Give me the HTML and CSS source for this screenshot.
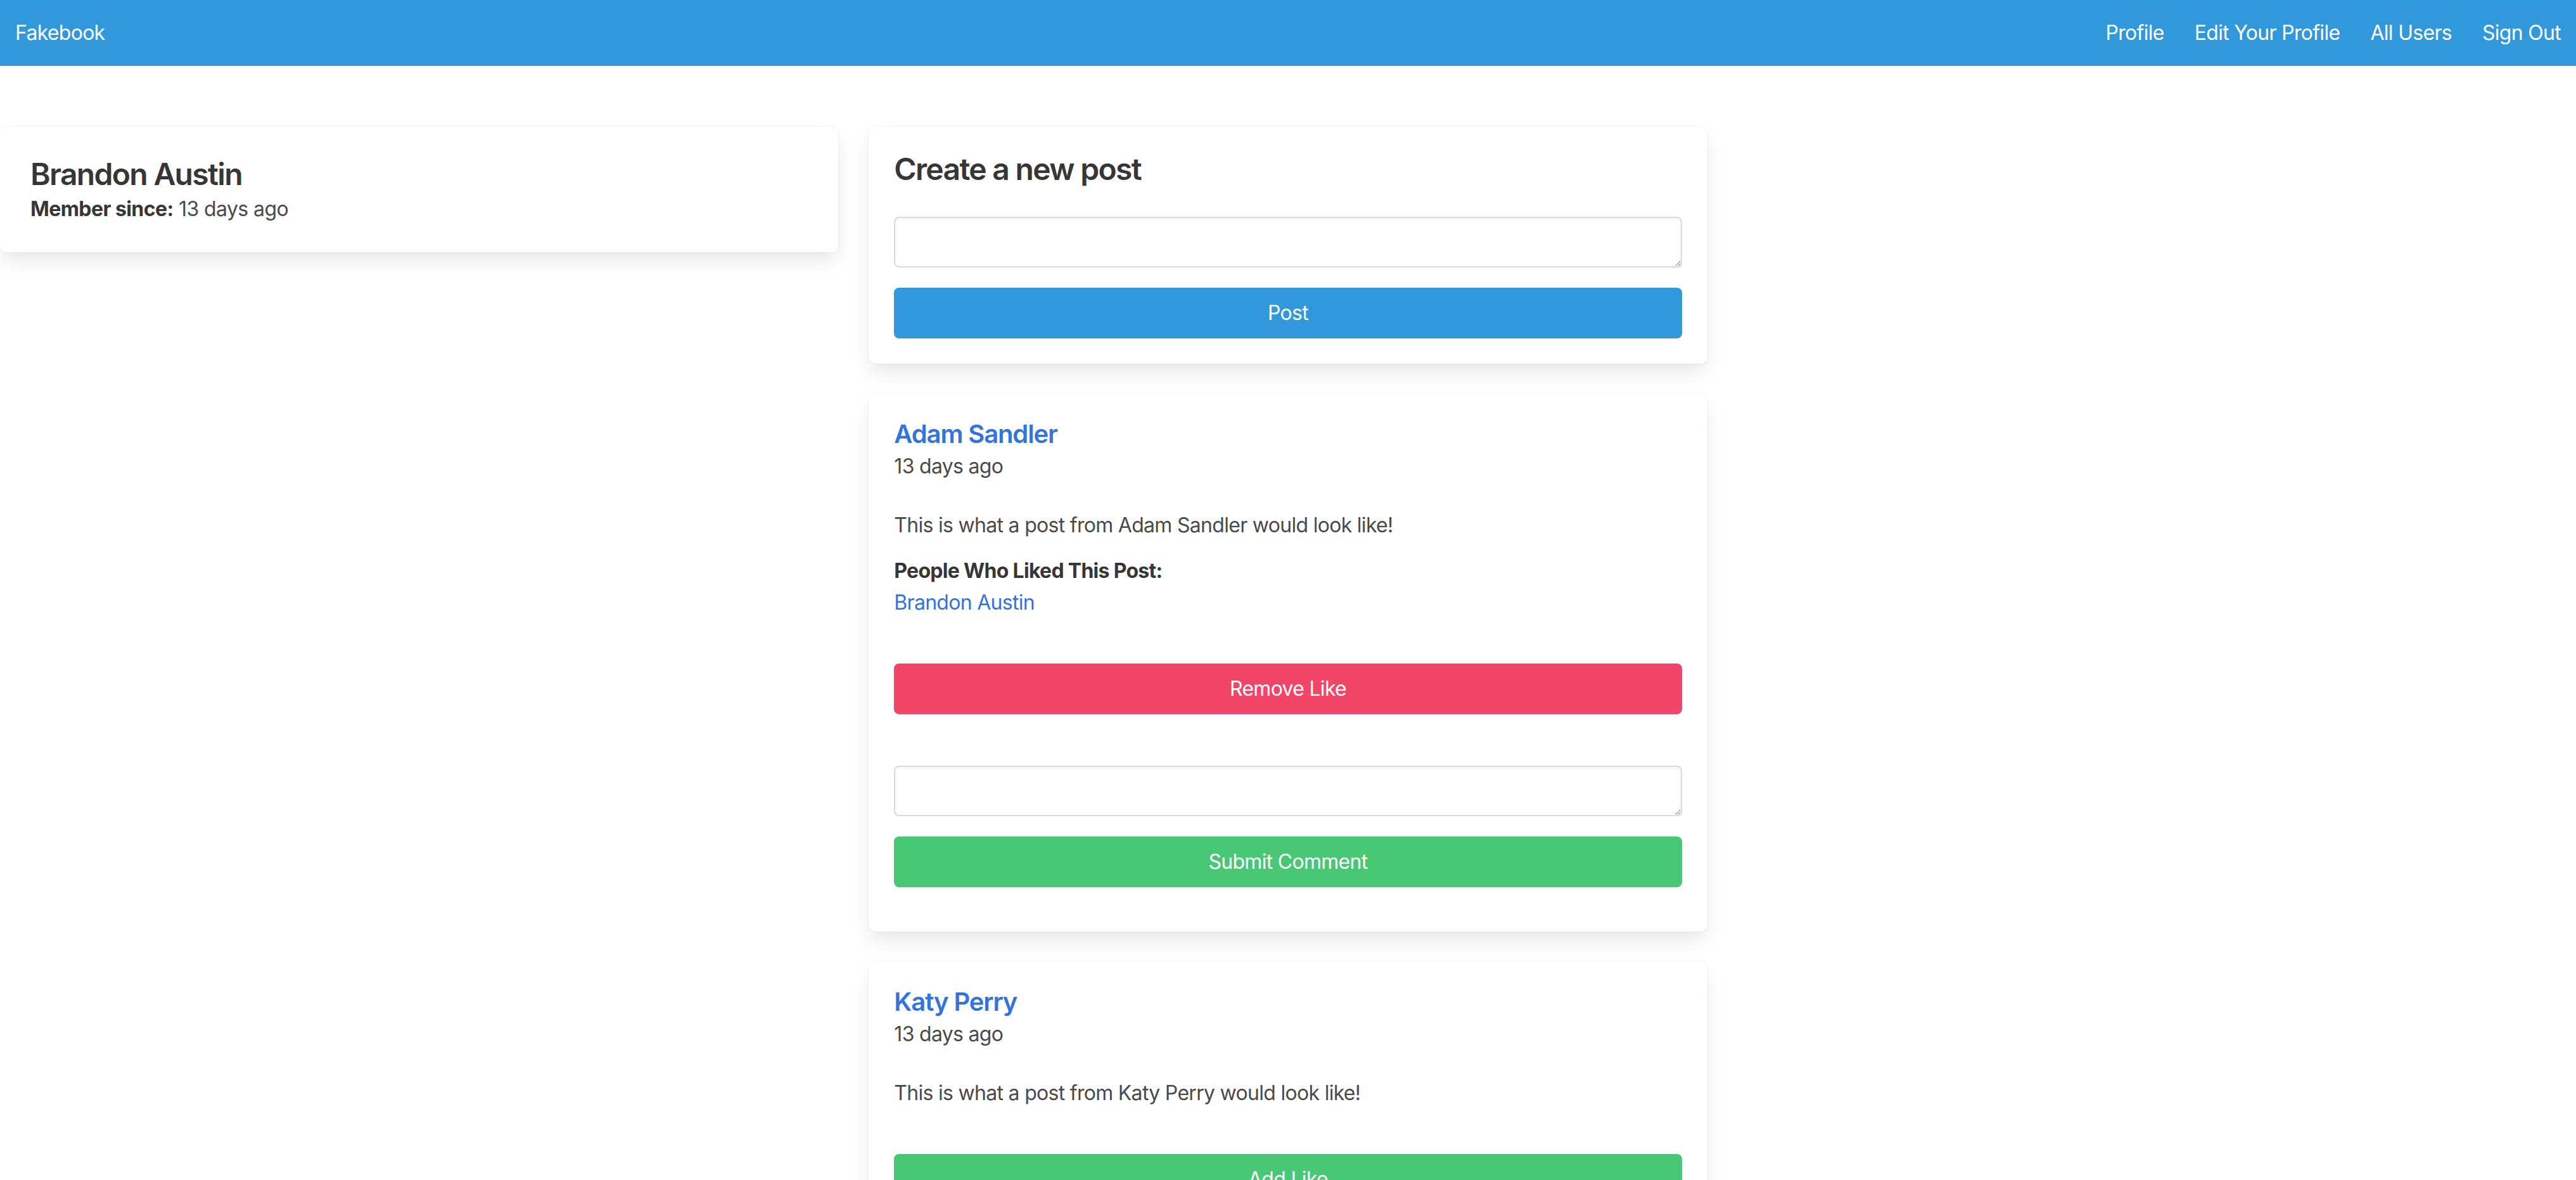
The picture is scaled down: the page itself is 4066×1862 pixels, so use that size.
FILE: index.html
```html
<!DOCTYPE html>
<html lang="en">
<head>
<meta charset="utf-8">
<title>Fakebook</title>
<link rel="stylesheet" href="styles.css">
</head>
<body>
<nav class="navbar">
  <a class="navbar-item brand" href="#">Fakebook</a>
  <div class="navbar-end">
    <a class="navbar-item" href="#">Profile</a>
    <a class="navbar-item" href="#">Edit Your Profile</a>
    <a class="navbar-item" href="#">All Users</a>
    <a class="navbar-item" href="#">Sign Out</a>
  </div>
</nav>
<main class="columns">
  <section class="column">
    <div class="card">
      <p class="card-title">Brandon Austin</p>
      <p class="member"><strong>Member since:</strong> 13 days ago</p>
    </div>
  </section>
  <section class="column">
    <div class="box">
      <h2 class="box-title">Create a new post</h2>
      <form class="form">
        <textarea class="input"></textarea>
        <button type="button" class="button is-info">Post</button>
      </form>
    </div>

    <div class="box">
      <a class="post-author" href="#">Adam Sandler</a>
      <p class="post-date">13 days ago</p>
      <p class="post-body">This is what a post from Adam Sandler would look like!</p>
      <p class="likes-title">People Who Liked This Post:</p>
      <a class="liker" href="#">Brandon Austin</a>
      <button type="button" class="button is-danger like-btn">Remove Like</button>
      <form class="form comment-form">
        <textarea class="input"></textarea>
        <button type="button" class="button is-success">Submit Comment</button>
      </form>
    </div>

    <div class="box">
      <a class="post-author" href="#">Katy Perry</a>
      <p class="post-date">13 days ago</p>
      <p class="post-body">This is what a post from Katy Perry would look like!</p>
      <button type="button" class="button is-success like-btn">Add Like</button>
      <form class="form comment-form">
        <textarea class="input"></textarea>
        <button type="button" class="button is-success">Submit Comment</button>
      </form>
    </div>
  </section>
  <section class="column"></section>
</main>
</body>
</html>
```
FILE: styles.css
```css
* { box-sizing: border-box; }
html, body {
  margin: 0;
  padding: 0;
  background: #fff;
}
body {
  font-family: Inter, "Noto Sans", "Liberation Sans", sans-serif;
  font-size: 32px;
  line-height: 1.5;
  letter-spacing: -0.022em;
  color: #4a4a4a;
}
a { text-decoration: none; }

.navbar {
  height: 104px;
  background: #3298dc;
  display: flex;
  align-items: center;
  justify-content: space-between;
}
.navbar-item {
  color: #fff;
  padding: 0 24px;
  line-height: 48px;
}
.navbar-end { display: flex; }

.columns {
  display: grid;
  grid-template-columns: repeat(3, 1fr);
  column-gap: 48px;
  padding-top: 96px;
  align-items: start;
}
.column { display: flex; flex-direction: column; }

.card {
  background: #fff;
  border-radius: 10px;
  box-shadow: 0 16px 32px -4px rgba(10,10,10,.1), 0 0 0 2px rgba(10,10,10,.02);
  padding: 48px 48px 44px;
}
.card-title {
  margin: 0;
  font-size: 48px;
  line-height: 54px;
  font-weight: 600;
  letter-spacing: -0.035em;
  color: #363636;
}
.member { margin: 4px 0 0; letter-spacing: -0.018em; }
.member strong { color: #363636; font-weight: 700; }

.box {
  background: #fff;
  border-radius: 12px;
  box-shadow: 0 16px 32px -4px rgba(10,10,10,.1), 0 0 0 2px rgba(10,10,10,.02);
  padding: 40px;
  margin-bottom: 48px;
  display: flex;
  flex-direction: column;
  align-items: flex-start;
}
.box-title {
  margin: 0 0 48px;
  font-size: 48px;
  line-height: 54px;
  font-weight: 600;
  letter-spacing: -0.035em;
  color: #363636;
}
.form {
  align-self: stretch;
  display: flex;
  flex-direction: column;
  gap: 32px;
}
.comment-form { margin: 81px 0 30px; }
.input {
  display: block;
  width: 100%;
  height: 80px;
  border: 2px solid #dbdbdb;
  border-radius: 8px;
  box-shadow: inset 0 2px 4px rgba(10,10,10,.05);
  padding: 14px 22px;
  font: inherit;
  color: #363636;
  background: #fff;
}
.button {
  display: block;
  width: 100%;
  height: 80px;
  border: 0;
  border-radius: 8px;
  font: inherit;
  letter-spacing: -0.022em;
  color: #fff;
  text-align: center;
}
.is-info { background: #3298dc; }
.is-danger { background: #f14668; }
.is-success { background: #48c774; }

.post-author {
  font-size: 40px;
  line-height: 45px;
  font-weight: 600;
  letter-spacing: -0.028em;
  color: #3273dc;
}
.post-date { margin: 5px 0 0; }
.post-body { margin: 45px 0 0; }
.likes-title {
  margin: 24px 0 0;
  font-weight: 700;
  color: #363636;
}
.liker { color: #3273dc; margin-top: 2px; }
.like-btn { margin-top: 72px; align-self: stretch; }
```
